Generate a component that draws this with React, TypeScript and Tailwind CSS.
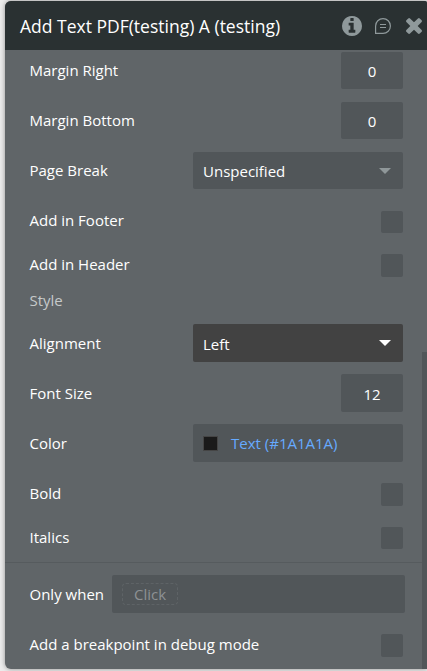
import type { ReactNode } from 'react'
import clsx from 'clsx'

const InfoIcon = () => (
  <svg viewBox="128 128 1536 1536" className="h-5 w-5 fill-current" aria-hidden="true">
    <path d="M1152 1376v-160q0-14-9-23t-23-9h-96v-512q0-14-9-23t-23-9h-320q-14 0-23 9t-9 23v160q0 14 9 23t23 9h96v320h-96q-14 0-23 9t-9 23v160q0 14 9 23t23 9h448q14 0 23-9t9-23zm-128-896v-160q0-14-9-23t-23-9h-192q-14 0-23 9t-9 23v160q0 14 9 23t23 9h192q14 0 23-9t9-23zm640 416q0 209-103 385.5t-279.5 279.5-385.5 103-385.5-103-279.5-279.5-103-385.5 103-385.5 279.5-279.5 385.5-103 385.5 103 279.5 279.5 103 385.5z" />
  </svg>
)

const CommentIcon = () => (
  <svg viewBox="0 0 16 16" className="h-4 w-4 fill-none stroke-current" aria-hidden="true">
    <path d="M0.6 15.4V8A7.4 7.4 0 1 1 8 15.4Z" strokeWidth="1.2" />
    <path d="M5 6.5H11M5 9.5H11" strokeWidth="1" />
  </svg>
)

const CloseIcon = () => (
  <svg viewBox="302 366 1188 1188" className="h-4 w-4 fill-current" aria-hidden="true">
    <path d="M1490 1322q0 40-28 68l-136 136q-28 28-68 28t-68-28l-294-294-294 294q-28 28-68 28t-68-28l-136-136q-28-28-28-68t28-68l294-294-294-294q-28-28-28-68t28-68l136-136q28-28 68-28t68 28l294 294 294-294q28-28 68-28t68 28l136 136q28 28 28 68t-28 68l-294 294 294 294q28 28 28 68z" />
  </svg>
)

type RowProps = {
  label: string
  className?: string
  labelClassName?: string
  children: ReactNode
}

const Row = ({ label, className, labelClassName = '-mt-px', children }: RowProps) => (
  <div className={clsx('flex shrink-0 items-center justify-between', className)}>
    <span className={labelClassName}>{label}</span>
    {children}
  </div>
)

const NumberField = ({ value, className = 'h-[37px]' }: { value: number; className?: string }) => (
  <div className={clsx('flex w-[62px] items-center justify-center rounded-xs bg-[#515659]', className)}>{value}</div>
)

const Select = ({ value, active = false }: { value: string; active?: boolean }) => (
  <div
    className={clsx(
      'flex w-[210px] items-center justify-between rounded-xs pr-3 pl-2.5',
      active ? 'h-[38px] bg-[#424242]' : 'h-[37px] bg-[#515659]',
    )}
  >
    <span className={clsx(active && 'pt-0.5')}>{value}</span>
    <svg
      viewBox="0 0 12 6"
      className={clsx('h-1.5 w-3 fill-current', active ? 'text-white' : 'text-[#8f9799]')}
      aria-hidden="true"
    >
      <path d="M0 0H12L6 6Z" />
    </svg>
  </div>
)

const Checkbox = ({ className = 'h-[22px]' }: { className?: string }) => (
  <button
    type="button"
    role="checkbox"
    aria-checked="false"
    className={clsx('w-[22px] rounded-xs bg-[#515659]', className)}
  />
)

export default function App() {
  return (
    <div className="h-[671px] w-[427px] overflow-hidden bg-[#ececec] pt-px pl-[5px] font-['Open_Sans',sans-serif] text-[15px] leading-5 text-white">
      <div className="flex h-[668px] flex-col overflow-hidden rounded-tl-md rounded-tr-xs rounded-bl-md bg-[#606568] shadow-[0_0_5px_rgba(0,0,0,0.4)]">
        <header className="flex h-[49px] shrink-0 items-center bg-[#2a3132] pt-px pr-[5px] pl-[15px]">
          <h1 className="-mt-px flex-1 text-[17.5px]">Add Text PDF(testing) A (testing)</h1>
          <div className="flex items-center text-[#8f999b]">
            <InfoIcon />
            <span className="mr-[15px] ml-[13px]">
              <CommentIcon />
            </span>
            <CloseIcon />
          </div>
        </header>

        <div className="flex min-h-0 flex-1">
          <div className="flex w-[417px] shrink-0 flex-col">
            <section className="flex h-[513px] shrink-0 flex-col border-b border-[#565b5e] pt-0.5 pr-[19px] pl-[24.5px]">
              <Row label="Margin Right">
                <NumberField value={0} />
              </Row>
              <Row label="Margin Bottom" className="mt-[13px]">
                <NumberField value={0} />
              </Row>
              <Row label="Page Break" className="mt-[13px]">
                <Select value="Unspecified" />
              </Row>
              <Row label="Add in Footer" className="mt-[22px] h-[22px]" labelClassName="-mt-1">
                <Checkbox />
              </Row>
              <Row label="Add in Header" className="mt-[21px] h-[23px]" labelClassName="-mt-[3px]">
                <Checkbox className="h-[23px]" />
              </Row>
              <h2 className="mt-[13px] h-5 text-[#c6c9ca]">Style</h2>
              <Row label="Alignment" className="mt-3.5">
                <Select value="Left" active />
              </Row>
              <Row label="Font Size" className="mt-3">
                <NumberField value={12} className="h-[38px] pt-0.5" />
              </Row>
              <Row label="Color" className="mt-3">
                <div className="flex h-[38px] w-[210px] items-center rounded-xs bg-[#515659] pl-2.5 text-[#66aaff]">
                  <span className="mr-[13px] h-[15px] w-[15px] border border-[#454545] bg-[#1a1a1a]" />
                  Text (#1A1A1A)
                </div>
              </Row>
              <Row label="Bold" className="mt-[21px] h-[23px]" labelClassName="-mt-[3px]">
                <Checkbox className="h-[23px]" />
              </Row>
              <Row label="Italics" className="mt-[21px] h-[22px]" labelClassName="-mt-0.5">
                <Checkbox />
              </Row>
            </section>

            <section className="flex shrink-0 flex-col pt-3 pl-[24.5px]">
              <div className="flex h-[38px] items-center">
                <span className="w-[82.5px]">Only when</span>
                <div className="flex h-[38px] w-[293px] items-center rounded-xs bg-[#515659] pl-2.5">
                  <span className="flex h-[22px] w-14 items-center justify-center rounded border border-dashed border-[#5e6366] text-[#8d9194]">
                    Click
                  </span>
                </div>
              </div>
              <Row
                label="Add a breakpoint in debug mode"
                className="mt-[21px] h-[23px] pr-[19px]"
                labelClassName="-mt-[3px]"
              >
                <Checkbox className="h-[23px]" />
              </Row>
            </section>
          </div>
          <div className="flex flex-1 items-end">
            <div className="h-[317px] w-full bg-[#515659]" />
          </div>
        </div>
      </div>
    </div>
  )
}
